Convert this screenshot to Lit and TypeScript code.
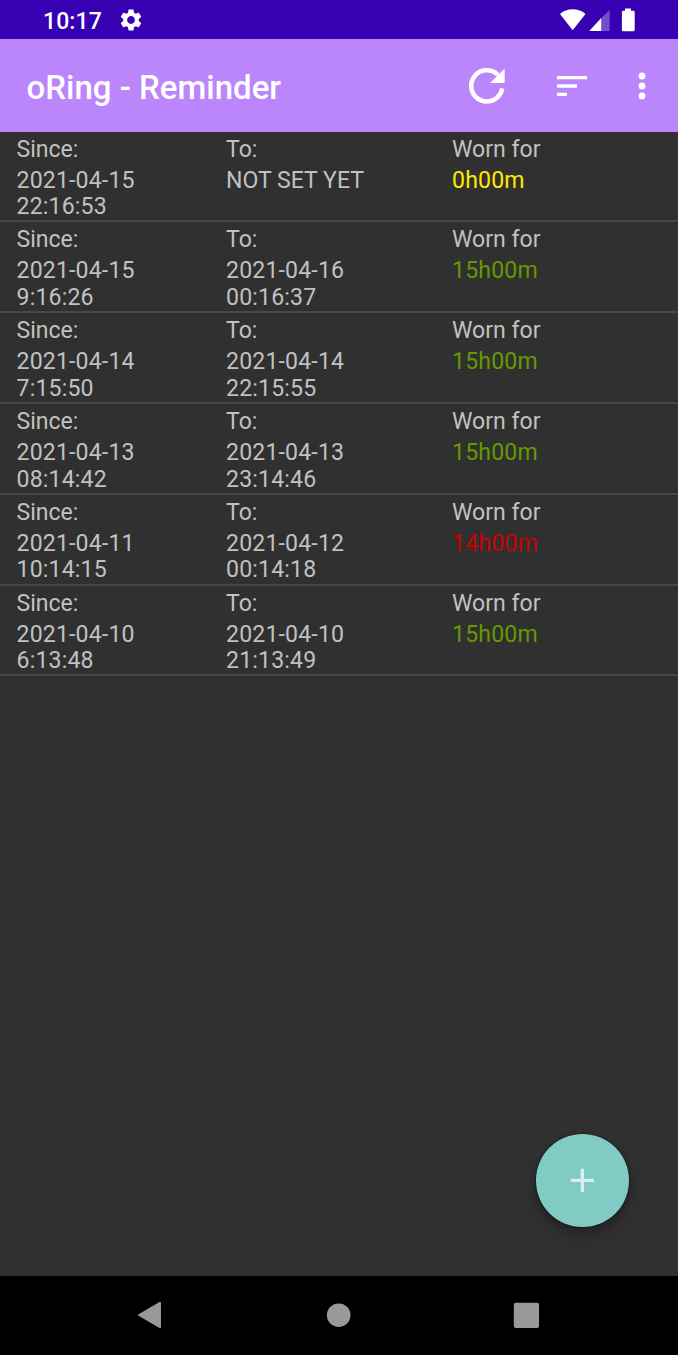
import { LitElement, html, css } from "lit";
import { customElement, property } from "lit/decorators.js";

interface Entry {
  from: string[];
  to: string[];
  worn: string;
  level: "active" | "good" | "bad";
}

const ENTRIES: Entry[] = [
  { from: ["2021-04-15", "22:16:53"], to: [], worn: "0h00m", level: "active" },
  { from: ["2021-04-15", "9:16:26"], to: ["2021-04-16", "00:16:37"], worn: "15h00m", level: "good" },
  { from: ["2021-04-14", "7:15:50"], to: ["2021-04-14", "22:15:55"], worn: "15h00m", level: "good" },
  { from: ["2021-04-13", "08:14:42"], to: ["2021-04-13", "23:14:46"], worn: "15h00m", level: "good" },
  { from: ["2021-04-11", "10:14:15"], to: ["2021-04-12", "00:14:18"], worn: "14h00m", level: "bad" },
  { from: ["2021-04-10", "6:13:48"], to: ["2021-04-10", "21:13:49"], worn: "15h00m", level: "good" },
];

@customElement("status-bar")
class StatusBar extends LitElement {
  static styles = css`
    :host { display: flex; align-items: center; height: 39.4px; box-sizing: border-box; padding: 0 42px 0 43px; background: #3700b3; color: #fff; }
    .time { font-size: 23px; font-weight: 500; line-height: 27px; padding-top: 3.4px; letter-spacing: 0.1px; }
    .gear { width: 26px; height: 26px; margin-left: 16.5px; }
    .spacer { flex: 1; }
    svg { display: block; fill: #fff; flex: none; }
    .system { width: 78px; height: 26px; }
  `;
  render() {
    return html`
      <span class="time">10:17</span>
      <svg class="gear" viewBox="0 0 24 24"><path d="M19.14 12.94c.04-.3.06-.61.06-.94 0-.32-.02-.64-.07-.94l2.03-1.58c.18-.14.23-.41.12-.61l-1.92-3.32c-.12-.22-.37-.29-.59-.22l-2.39.96c-.5-.38-1.03-.7-1.62-.94l-.36-2.54c-.04-.24-.24-.41-.48-.41h-3.84c-.24 0-.43.17-.47.41l-.36 2.54c-.59.24-1.13.57-1.62.94l-2.39-.96c-.22-.08-.47 0-.59.22L2.74 8.87c-.12.21-.08.47.12.61l2.03 1.58c-.05.3-.09.63-.09.94s.02.64.07.94l-2.03 1.58c-.18.14-.23.41-.12.61l1.92 3.32c.12.22.37.29.59.22l2.39-.96c.5.38 1.03.7 1.62.94l.36 2.54c.05.24.24.41.48.41h3.84c.24 0 .44-.17.47-.41l.36-2.54c.59-.24 1.13-.56 1.62-.94l2.39.96c.22.08.47 0 .59-.22l1.92-3.32c.12-.22.07-.47-.12-.61l-2.01-1.58zM12 15.6c-1.98 0-3.6-1.62-3.6-3.6s1.62-3.6 3.6-3.6 3.6 1.62 3.6 3.6-1.62 3.6-3.6 3.6z"/></svg>
      <span class="spacer"></span>
      <svg class="system" viewBox="558 6.7 78 26">
        <path d="M572.7 29.9 L560 13.6 Q565.5 9 572.7 9 T585.5 13.6 Z"/>
        <path opacity=".3" d="M609.7 9.8 V30.7 H601 V18 Z"/>
        <path d="M601.2 17.6 V30.7 H589.2 Z"/>
        <path d="M625 8.2 h6 v2.2 h2.3 q1.4 0 1.4 1.4 v17.8 q0 1.4 -1.4 1.4 h-10 q-1.4 0 -1.4 -1.4 v-17.8 q0 -1.4 1.4 -1.4 h1.7z"/>
      </svg>
    `;
  }
}

@customElement("app-bar")
class AppBar extends LitElement {
  static styles = css`
    :host { display: flex; align-items: center; height: 92.2px; box-sizing: border-box; padding: 0.4px 16.5px 0 26.5px; background: #bb86fc; color: #fff; }
    .title { flex: 1; font-size: 33px; font-weight: 500; line-height: 40px; padding-top: 4px; white-space: nowrap; }
    svg { display: block; fill: #fff; flex: none; }
    .refresh { width: 40px; height: 40px; margin-right: 45.5px; }
    .sort { width: 40px; height: 40px; margin-right: 29.5px; }
    .more { width: 40px; height: 40px; }
  `;
  render() {
    return html`
      <span class="title">oRing - Reminder</span>
      <svg class="refresh" viewBox="0 0 40 40">
        <path fill="none" stroke="#fff" stroke-width="4.6" d="M35.2 22.4 A15.6 15.6 0 1 1 31 9"/>
        <path d="M37.7 2.6 V17 H23.1 Z"/>
      </svg>
      <svg class="sort" viewBox="0 0 24 24"><path d="M3 18h6v-2H3v2zM3 6v2h18V6H3zm0 7h12v-2H3v2z"/></svg>
      <svg class="more" viewBox="0 0 24 24"><circle cx="12" cy="6" r="2.05"/><circle cx="12" cy="12" r="2.05"/><circle cx="12" cy="18" r="2.05"/></svg>
    `;
  }
}

@customElement("wear-row")
class WearRow extends LitElement {
  @property({ attribute: false }) entry!: Entry;
  static styles = css`
    :host { display: grid; grid-template-columns: 209.5px 226px 1fr; height: 90.8px; box-sizing: border-box; padding: 5.1px 0 0 16.5px; border-bottom: 2px solid #484848; font-size: 23.07px; line-height: 26.6px; color: #c1c1c1; }
    .label { margin-bottom: 4.3px; }
    .value { letter-spacing: 0.17px; }
    .active { color: #ffea00; }
    .good { color: #669900; }
    .bad { color: #cc0000; }
  `;
  render() {
    const e = this.entry;
    return html`
      <div><div class="label">Since:</div>${e.from.map((t) => html`<div class="value">${t}</div>`)}</div>
      <div><div class="label">To:</div>${e.to.length ? e.to.map((t) => html`<div class="value">${t}</div>`) : html`<div>NOT SET YET</div>`}</div>
      <div><div class="label">Worn for</div><div class="value ${e.level}">${e.worn}</div></div>
    `;
  }
}

@customElement("nav-bar")
class NavBar extends LitElement {
  static styles = css`
    :host { display: flex; align-items: center; justify-content: center; gap: 148px; height: 79px; box-sizing: border-box; padding: 0 1px 1px 0; background: #000; }
    svg { display: block; width: 40px; height: 40px; fill: #999; }
  `;
  render() {
    return html`
      <svg viewBox="0 0 40 40"><path stroke="#999" stroke-width="2" stroke-linejoin="round" d="M29 7.8 V32.2 L8 20 Z"/></svg>
      <svg viewBox="0 0 40 40"><circle cx="19.7" cy="20.2" r="11.8"/></svg>
      <svg viewBox="0 0 40 40"><rect x="6.8" y="7.8" width="25.2" height="25.2" rx="2"/></svg>
    `;
  }
}

@customElement("app-root")
class AppRoot extends LitElement {
  static styles = css`
    :host { display: flex; flex-direction: column; position: relative; width: 678px; height: 1355px; overflow: hidden; background: #303030; font-family: Roboto, sans-serif; }
    .list { flex: 1; min-height: 0; }
    .fab { position: absolute; right: 49.3px; bottom: 128.5px; width: 92.6px; height: 92.6px; border: 0; padding: 0; border-radius: 50%; background: #80cbc4; display: grid; place-items: center; box-shadow: 0 0 1.5px #000, 0 8px 14px rgba(0, 0, 0, 0.22), 0 3px 6px rgba(0, 0, 0, 0.15); }
    .plus { width: 40px; height: 40px; fill: #d9efed; }
  `;
  render() {
    return html`
      <status-bar></status-bar>
      <app-bar></app-bar>
      <main class="list">${ENTRIES.map((e) => html`<wear-row .entry=${e}></wear-row>`)}</main>
      <button class="fab" aria-label="Add"><svg class="plus" viewBox="-0.2 -0.2 24 24"><path d="M19 13h-6v6h-2v-6H5v-2h6V5h2v6h6v2z"/></svg></button>
      <nav-bar></nav-bar>
    `;
  }
}
